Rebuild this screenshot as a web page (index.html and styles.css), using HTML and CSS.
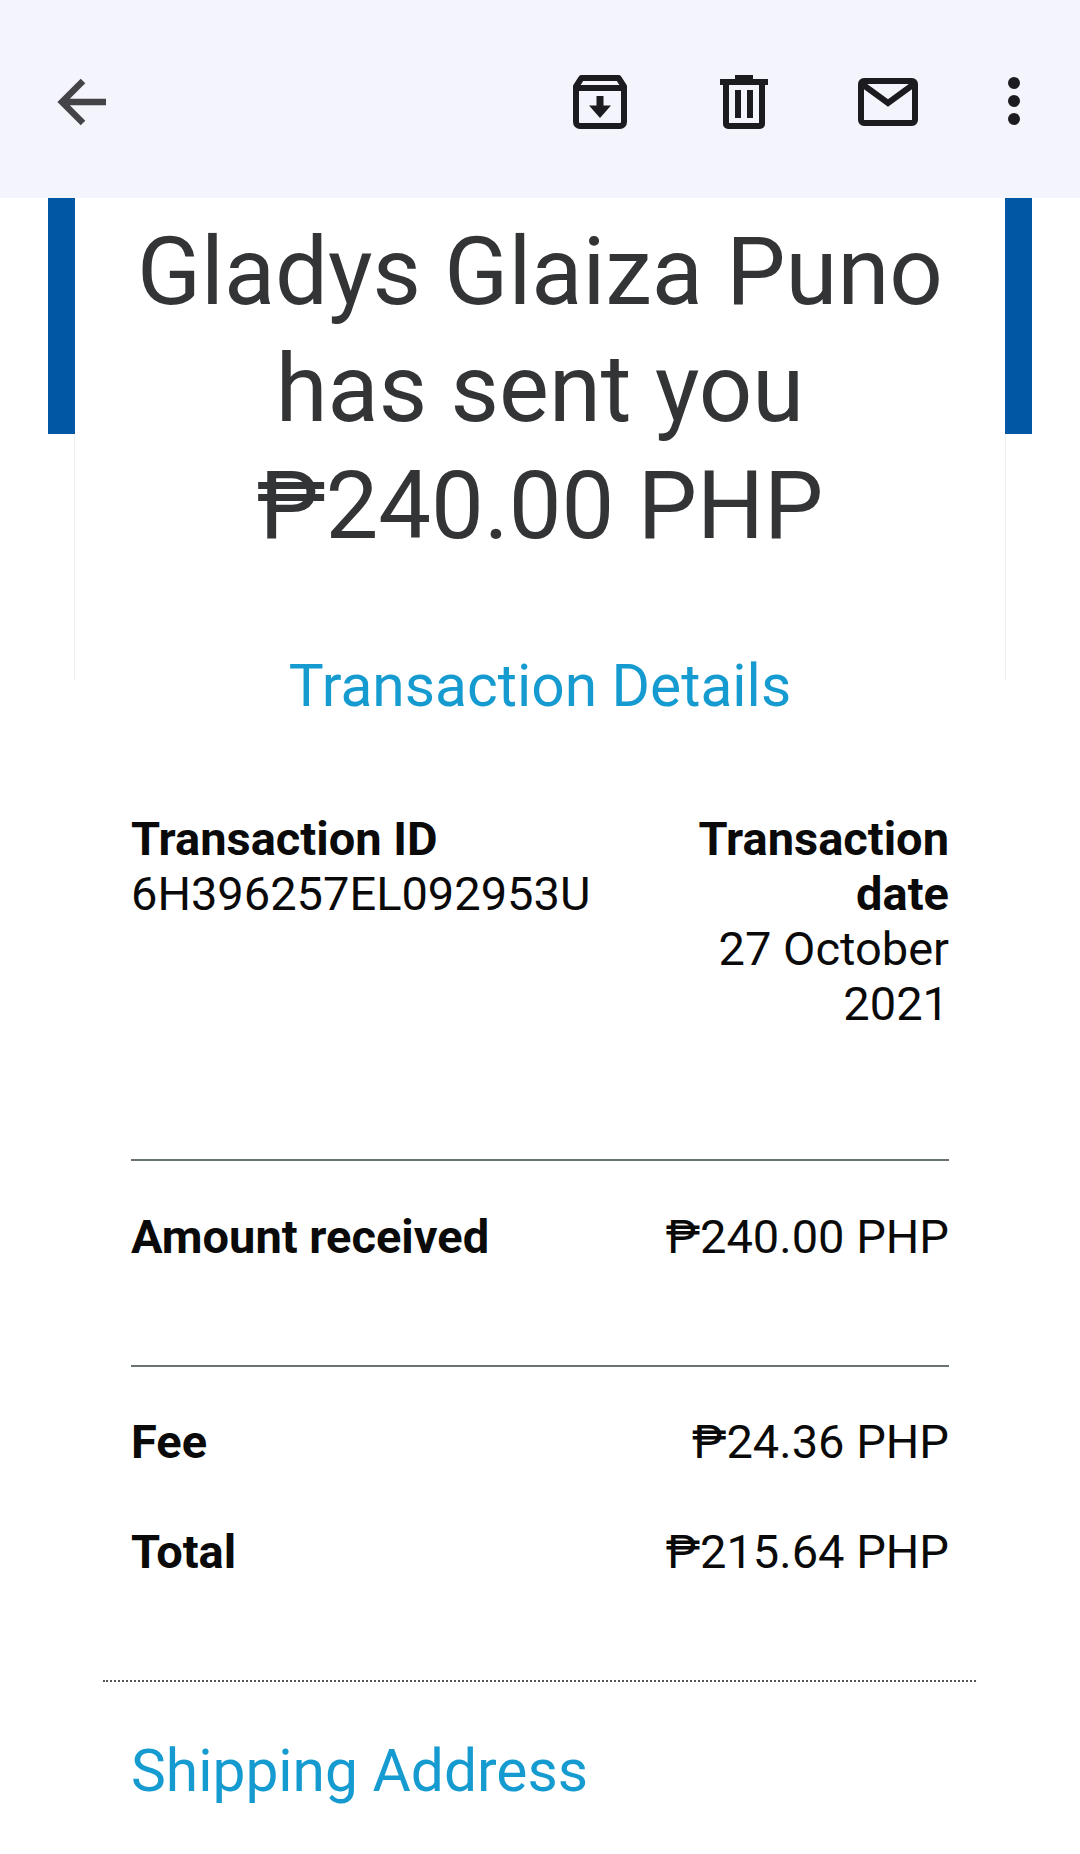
FILE: index.html
```html
<!DOCTYPE html>
<html lang="en">
<head>
<meta charset="utf-8">
<title>Transaction</title>
<link rel="stylesheet" href="styles.css">
</head>
<body>
<header class="topbar">
  <svg class="icon-back" width="60" height="60" viewBox="0 0 60 60"><path d="M52 27H9M29 6 8 27l21 21" fill="none" stroke="#444448" stroke-width="6.500"/></svg>
  <div class="actions">
    <svg class="icon-archive" width="54" height="54" viewBox="0 0 54 54"><path d="M3 11.500 8.500 3h37l5.500 8.500V47a4 4 0 0 1-4 4H7a4 4 0 0 1-4-4z M3 13h48" fill="none" stroke="#1c1c20" stroke-width="6" stroke-linejoin="round"/><path d="M23.500 21h7v9.500H38L27 43 16 30.500h7.500z" fill="#1c1c20"/></svg>
    <svg class="icon-trash" width="48" height="54" viewBox="0 0 48 54"><path d="M0 4h15V0h18v4h15v6H0z" fill="#1c1c20"/><path d="M6 8v41a2 2 0 0 0 2 2h32a2 2 0 0 0 2-2V8M18 15v28M30 15v28" fill="none" stroke="#1c1c20" stroke-width="6"/></svg>
    <svg class="icon-mail" width="60" height="48" viewBox="0 0 60 48"><rect x="3" y="3" width="54" height="42" rx="3" fill="none" stroke="#1c1c20" stroke-width="6"/><path d="M4 6l26 19L56 6" fill="none" stroke="#1c1c20" stroke-width="6"/></svg>
    <svg class="icon-more" width="12" height="48" viewBox="0 0 12 48"><circle cx="6" cy="6" r="6" fill="#1c1c20"/><circle cx="6" cy="24" r="6" fill="#1c1c20"/><circle cx="6" cy="42" r="6" fill="#1c1c20"/></svg>
  </div>
</header>
<main>
  <section class="hero">
    <div class="hero-inner">
      <h1 class="headline">Gladys Glaiza Puno<br>has sent you<br>₱240.00 PHP</h1>
    </div>
  </section>
  <h2 class="heading heading-center">Transaction Details</h2>
  <section class="details">
    <div class="row row-meta">
      <div><strong>Transaction ID</strong><br>6H396257EL092953U</div>
      <div class="col-date"><strong>Transaction date</strong><br>27 October 2021</div>
    </div>
    <hr class="rule">
    <div class="row row-amount">
      <strong>Amount received</strong>
      <span>₱240.00 PHP</span>
    </div>
    <hr class="rule">
    <div class="row row-fee">
      <strong>Fee</strong>
      <span>₱24.36 PHP</span>
    </div>
    <div class="row row-total">
      <strong>Total</strong>
      <span>₱215.64 PHP</span>
    </div>
  </section>
  <hr class="dotted">
  <h2 class="heading heading-left">Shipping Address</h2>
</main>
</body>
</html>
```
FILE: styles.css
```css
html, body { margin: 0; padding: 0; background: #fff; }
body { font-family: Roboto, sans-serif; color: #0a0a0a; height: 1854px; overflow: hidden; }
.topbar { height: 198px; background: #f3f4fc; display: flex; align-items: center; justify-content: space-between; padding: 0 60px 0 54px; box-sizing: border-box; }
.actions { display: flex; align-items: center; }
.icon-back { display: block; margin-top: 11px; }
.icon-archive { display: block; margin-top: 6px; }
.icon-trash { display: block; margin-left: 93px; margin-top: 6px; }
.icon-mail { display: block; margin-left: 90px; margin-top: 6px; }
.icon-more { display: block; margin-left: 90px; margin-top: 3px; }
.hero { position: relative; margin: 0 48px; height: 482px; }
.hero::before, .hero::after { content: ""; position: absolute; top: 0; width: 27px; height: 236px; background: #0257a5; }
.hero::before { left: 0; }
.hero::after { right: 0; }
.hero-inner { margin: 0 26px; height: 100%; box-sizing: border-box; padding-top: 16px; border-left: 1px solid #eee; border-right: 1px solid #eee; }
.headline { margin: 0; font-size: 94px; line-height: 117px; font-weight: 400; text-align: center; color: #333436; }
.heading { margin: 0; font-weight: 400; font-size: 58.700px; line-height: 70px; color: #169bd0; }
.heading-center { text-align: center; margin-top: -29px; }
.heading-left { margin-left: 131px; margin-top: 54px; }
.details { margin: 90px 131px 0; font-size: 47px; line-height: 55px; }
.row { display: flex; justify-content: space-between; }
.row strong { font-weight: 700; }
.col-date { width: 270px; text-align: right; }
.row-meta { height: 348px; }
.rule { margin: 0; border: 0; border-top: 2px solid #6a7470; }
.row-amount { height: 204px; padding-top: 48px; box-sizing: border-box; }
.row-fee { padding-top: 47px; }
.row-total { padding-top: 55px; }
.dotted { margin: 101px 104px 0 103px; border: 0; border-top: 2px dotted #555; }
```
